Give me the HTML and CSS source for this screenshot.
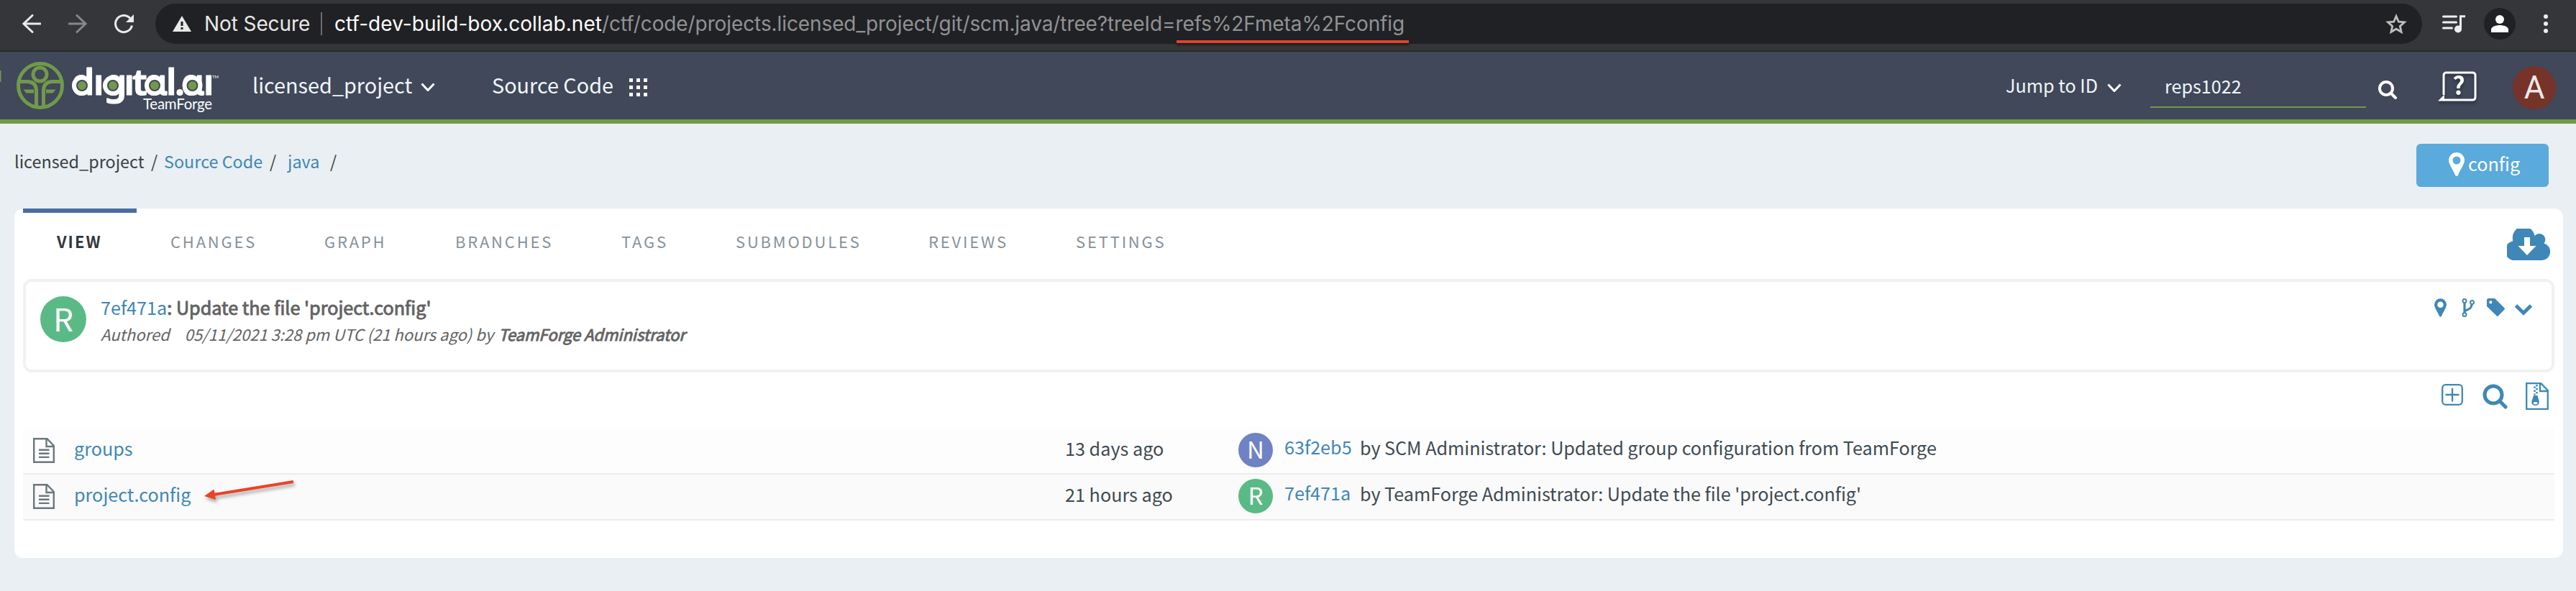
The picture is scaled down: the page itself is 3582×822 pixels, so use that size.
FILE: index.html
```html
<!DOCTYPE html>
<html lang="en">
<head>
<meta charset="utf-8">
<title>TeamForge - Source Code</title>
<link rel="stylesheet" href="styles.css">
</head>
<body>
<div class="browser">
  <svg class="nav-icon back" viewBox="0 0 26 26"><path d="M25 13H2M14 1.5L2 13l12 11.500"/></svg>
  <svg class="nav-icon forward" viewBox="0 0 26 26"><path d="M1 13h23M12 1.500L24 13 12 24.500"/></svg>
  <svg class="nav-icon reload" viewBox="0 0 28 28"><path d="M24.500 16.500A11.600 11.600 0 1 1 22 6.500"/><path class="solid" d="M27 1v11H16z"/></svg>
  <div class="omnibox">
    <svg class="warning" viewBox="0 0 26 22"><path d="M13 0l13 22H0z"/><path class="mark" d="M11.500 8h3v6h-3zM11.500 16h3v3h-3z"/></svg>
    <span class="not-secure">Not Secure</span>
    <span class="divider"></span>
    <span class="url"><span class="host">ctf-dev-build-box.collab.net</span><span class="path">/ctf/code/projects.licensed_project/git/scm.java/tree?treeId=refs%2Fmeta%2Fconfig</span></span>
    <svg class="star" viewBox="0 0 30 28"><path d="M15 3.500l3.300 7.600 8.200.8-6.200 5.500 1.800 8.100L15 21.200l-7.100 4.300 1.800-8.100-6.200-5.500 8.200-.8z"/></svg>
  </div>
  <svg class="queue" viewBox="0 0 32 25"><path d="M1.500 2h18M1.500 10h18M1.500 18h12"/><path class="stem" d="M25.500 20V1.700h6.500"/><circle cx="22" cy="19.500" r="5"/></svg>
  <div class="profile"><svg viewBox="0 0 24 24"><circle cx="12" cy="6" r="6"/><path d="M0 24v-4c0-4 7-6 12-6s12 2 12 6v4z"/></svg></div>
  <svg class="dots" viewBox="0 0 6 26"><circle cx="3" cy="3" r="3"/><circle cx="3" cy="13" r="3"/><circle cx="3" cy="23" r="3"/></svg>
  <div class="url-underline"></div>
</div>

<header class="header">
  <svg class="logo" viewBox="0 0 310 90">
    <path class="edge" d="M0 25h1.500v16H0z"/>
    <g class="emblem">
      <circle cx="56" cy="46" r="30.500"/>
      <circle cx="55.500" cy="30.500" r="9.500"/>
      <path d="M26 40.500h12q12.500 0 12.500 13V76M86 40.500H73q-12.500 0-12.500 13V76"/>
    </g>
    <path class="leaf" d="M32.500 51.500H47v5H36.500zM77.500 51.500H64v5h9.500z"/>
    <g class="bowl"><circle cx="114" cy="46" r="14"/><circle cx="157" cy="46" r="14"/><circle cx="215" cy="46" r="14"/><circle cx="267.500" cy="46" r="14"/></g>
    <text class="word" y="59" x="99.500 130 144.500 172.500 184 200.500 231 243 252 283">dıgıtɑl.ɑı</text>
    <g class="counter"><circle cx="114" cy="46" r="7"/><circle cx="157" cy="46" r="7"/><circle cx="215" cy="46" r="7"/><circle cx="267.500" cy="46" r="7"/></g>
    <text class="tm" x="295" y="36">TM</text>
    <text class="sub" x="199" y="79" textLength="96">TeamForge</text>
  </svg>
  <div class="project">licensed_project</div>
  <svg class="caret" viewBox="0 0 20 12"><path d="M1.500 1.500L10 10.500l8.500-9"/></svg>
  <div class="area">Source Code</div>
  <svg class="grid" viewBox="0 0 25 25"><path d="M0 0h5v5H0zM10 0h5v5h-5zM20 0h5v5h-5zM0 10h5v5H0zM10 10h5v5h-5zM20 10h5v5h-5zM0 20h5v5H0zM10 20h5v5h-5zM20 20h5v5h-5z"/></svg>
  <div class="jump">Jump to ID</div>
  <svg class="caret jump-caret" viewBox="0 0 20 12"><path d="M1.500 1.500L10 10.500l8.500-9"/></svg>
  <div class="field">reps1022</div>
  <svg class="find" viewBox="0 0 26 26"><circle cx="11" cy="11" r="9"/><path d="M17.500 17.500l6.500 6.500"/></svg>
  <svg class="help" viewBox="0 0 54 48"><path class="frame" d="M8 34V7q0-4 4-4h36q4 0 4 4v30q0 4-4 4H8"/><path class="tail" d="M0 42.500l9-9v9z"/><text x="29" y="34">?</text></svg>
  <div class="user">A</div>
</header>

<div class="crumb-row">
  <div class="crumbs"><span class="c1">licensed_project</span><span class="c2">/</span><a class="c3">Source Code</a><span class="c4">/</span><a class="c5">java</a><span>/</span></div>
  <div class="config-button"><svg viewBox="0 0 22 33"><path fill-rule="evenodd" d="M11 0a11 11 0 0 1 11 11c0 5-6.500 14-9 20.500q-2 3-4 0C6.500 25 0 16 0 11A11 11 0 0 1 11 0zm0 5.500a5.500 5.500 0 1 0 0 11 5.500 5.500 0 0 0 0-11z"/></svg><span>config</span></div>
</div>

<main class="panel">
  <nav class="tabs">
    <div class="tab active">VIEW</div>
    <div class="tab w-changes">CHANGES</div>
    <div class="tab w-graph">GRAPH</div>
    <div class="tab w-branches">BRANCHES</div>
    <div class="tab w-tags">TAGS</div>
    <div class="tab w-submodules">SUBMODULES</div>
    <div class="tab w-reviews">REVIEWS</div>
    <div class="tab">SETTINGS</div>
    <svg class="cloud" viewBox="0 0 60 44"><path d="M13.500 44A13.500 13.500 0 0 1 8 17.500V15A15.300 15.300 0 0 1 38.500 10 8.300 8.300 0 0 1 51.500 20.500 12 12 0 0 1 49 44z"/><path class="arrow" d="M24 12h8v12h8.500L28 37 15.500 24H24z"/></svg>
  </nav>

  <section class="commit">
    <div class="avatar big green">R</div>
    <div class="commit-text">
      <div class="title"><a>7ef471a</a><span class="faux">: Update the file 'project.config'</span></div>
      <div class="meta"><span class="authored">Authored</span><span class="when">05/11/2021 3:28 pm UTC (21 hours ago) by</span><span class="faux who">TeamForge Administrator</span></div>
    </div>
    <div class="commit-icons">
      <svg class="pin" viewBox="0 0 22 33"><path fill-rule="evenodd" d="M11 0a11 11 0 0 1 11 11c0 5-6.500 14-9 20.500q-2 3-4 0C6.500 25 0 16 0 11A11 11 0 0 1 11 0zm0 5.500a5.500 5.500 0 1 0 0 11 5.500 5.500 0 0 0 0-11z"/></svg>
      <svg class="branch" viewBox="0 0 18 26"><g><circle cx="4" cy="3.500" r="2.500"/><circle cx="4" cy="22.500" r="2.500"/><circle cx="14.500" cy="5.500" r="2.500"/></g><path d="M4 6v14M4.500 18c2-3.500 9-1 9.500-9.500"/></svg>
      <svg class="tag" viewBox="0 0 25 25"><path fill-rule="evenodd" d="M2.500 0H11l13.300 13.300q1.200 1.200 0 2.400l-8.400 8.600q-1.200 1.200-2.400 0L0 11V2.500Q0 0 2.500 0zM5.300 3.300a2.100 2.100 0 1 0 0 4.200 2.100 2.100 0 0 0 0-4.200z"/></svg>
      <svg class="down" viewBox="0 0 26 17"><path d="M2.500 3L13 13.300 23.500 3"/></svg>
    </div>
  </section>

  <div class="tools">
    <svg class="plus" viewBox="0 0 30 30"><rect x="1.200" y="1.200" width="27.600" height="27.600" rx="4.500"/><path d="M15 6v18.500M5.500 15h19"/></svg>
    <svg class="search" viewBox="0 0 35 35"><circle cx="15" cy="15" r="12"/><path d="M24 24l8 8"/></svg>
    <svg class="zip" viewBox="0 0 32 38"><path d="M1.200 1.200h20L30.800 11v25.800H1.200zM20 1.500V12h11"/><path class="teeth right" d="M15.500 3v14"/><path class="teeth left" d="M12.500 5.500v12"/><path class="pull" fill-rule="evenodd" d="M11 18h5.500l2.300 8.500c.8 7.500-11.300 7.500-10.500 0zM13.600 27c-4 0-4 3.500 0 3.500s4-3.500 0-3.500z"/></svg>
  </div>

  <div class="files">
    <div class="row first">
      <svg class="file" viewBox="0 0 30 35"><path d="M1.200 1.200h18.300L28.800 11v22.800H1.200zM18.500 1.500V12h10M8 16.700h14.500M8 21.800h14.500M8 26.900h14.500"/></svg>
      <a class="name">groups</a>
      <div class="date">13 days ago</div>
      <div class="avatar small violet">N</div>
      <a class="hash">63f2eb5</a>
      <div class="msg">by SCM Administrator: Updated group configuration from TeamForge</div>
    </div>
    <div class="row">
      <svg class="file" viewBox="0 0 30 35"><path d="M1.200 1.200h18.300L28.800 11v22.800H1.200zM18.500 1.500V12h10M8 16.700h14.500M8 21.800h14.500M8 26.900h14.500"/></svg>
      <a class="name">project.config</a>
      <div class="date">21 hours ago</div>
      <div class="avatar small green">R</div>
      <a class="hash">7ef471a</a>
      <div class="msg">by TeamForge Administrator: Update the file 'project.config'</div>
      <svg class="pointer" viewBox="0 0 132 44"><path class="line" d="M126 16L15 34"/><path class="head" d="M2 36l13.500-9.500L18 41z"/></svg>
    </div>
  </div>
</main>
</body>
</html>
```
FILE: styles.css
```css
* { box-sizing: border-box; }
body {
  margin: 0;
  height: 822px;
  overflow: hidden;
  background: #e9eff2;
  color: #3f4a51;
  font-family: "Noto Sans CJK SC", "Noto Sans CJK JP", sans-serif;
  font-size: 25.2px;
  white-space: nowrap;
}
svg { display: block; flex: none; fill: none; }
a { color: #3f87b7; text-decoration: none; }

/* Browser toolbar */
.browser {
  position: relative;
  display: flex;
  align-items: center;
  height: 72px;
  padding: 0 39px 4px 31px;
  background: #35363a;
  border-bottom: 2px solid #282a2a;
}
.nav-icon { width: 26px; height: 26px; stroke: #e9eaed; stroke-width: 3px; stroke-linecap: round; }
.forward { margin-left: 38px; stroke: #86878a; }
.reload { width: 28px; height: 28px; margin-left: 38px; stroke-linecap: butt; }
.solid { fill: #e9eaed; stroke: none; }
.omnibox {
  display: flex;
  align-items: center;
  width: 3152px;
  height: 56px;
  margin-left: 29px;
  padding: 0 21px 0 24px;
  border-radius: 28px;
  background: #202124;
  color: #e8e8e8;
  font-family: Inter, sans-serif;
  font-size: 28px;
}
.warning { width: 26px; height: 22px; fill: #e8e8e8; }
.mark { fill: #202124; }
.not-secure { width: 163px; padding-left: 18px; letter-spacing: -.1px; }
.divider { width: 2px; height: 32px; margin-left: 17px; background: #6b6c6f; }
.url { flex: 1; padding-left: 17px; color: #919294; }
.host { color: #fff; letter-spacing: .05px; }
.path { letter-spacing: -.1px; }
.star { width: 30px; height: 28px; stroke: #bdbdbd; stroke-width: 2.800px; }
.queue { width: 32px; height: 25px; margin-left: 28px; stroke: #eceef0; stroke-width: 3px; stroke-linecap: round; }
.queue .stem { stroke-linecap: butt; }
.queue circle { fill: #eceef0; stroke: none; }
.profile { display: grid; place-items: center; width: 44px; height: 44px; margin-left: 26px; border-radius: 50%; background: #202124; }
.profile svg { width: 24px; height: 24px; fill: #fff; }
.dots { width: 6px; height: 26px; margin-left: 39px; fill: #eceef0; }
.url-underline { position: absolute; left: 1636px; top: 56px; width: 323px; height: 4px; background: #e6412a; box-shadow: 0 3px 3px rgba(0, 0, 0, .4); }

/* Application header */
.header {
  display: flex;
  align-items: center;
  height: 100px;
  padding: 0 28px 2px 0;
  background: #40485a;
  border-bottom: 6px solid #72994a;
  color: #f1f6f9;
  font-size: 28.800px;
  line-height: 40px;
}
.logo { width: 310px; height: 90px; }
.edge, .leaf { fill: #72994a; }
.emblem { stroke: #72994a; stroke-width: 5px; }
.bowl { fill: #fff; }
.counter { fill: #72994a; stroke: #40485a; stroke-width: 2px; }
.word { fill: #fff; stroke: #fff; stroke-width: 1.200px; stroke-linejoin: round; font: 600 51px "Noto Sans", sans-serif; }
.tm { fill: #fff; font: 6px Lato, sans-serif; }
.sub { fill: #fff; font: 20.500px Lato, sans-serif; }
.project { width: 234px; margin-left: 41px; }
.caret { width: 20px; height: 12px; margin-top: 5px; stroke: #fff; stroke-width: 3px; }
.area { width: 191px; margin-left: 79px; }
.grid { width: 25px; height: 25px; margin-top: 6px; fill: #fff; }
.jump { width: 141px; margin-left: auto; font-size: 25.200px; }
.jump-caret { margin-top: 8px; }
.field { width: 300px; height: 94px; margin: 2px 0 0 40px; padding: 27px 0 0 20px; font-size: 25.200px; background: linear-gradient(#72994a, #72994a) 0 76px / 300px 2px no-repeat; }
.find { width: 26px; height: 26px; margin: 14px 0 0 17px; stroke: #fff; stroke-width: 4px; stroke-linecap: round; }
.help { width: 54px; height: 48px; margin: 8px 0 0 57px; overflow: visible; filter: drop-shadow(0 3px 2px rgba(0, 0, 0, .35)); }
.frame { stroke: #fff; stroke-width: 3px; }
.tail { fill: #fff; }
.help text { fill: #fff; font: 700 34px "Noto Sans CJK SC", sans-serif; text-anchor: middle; }
.user { width: 60px; height: 60px; margin: 8px 0 0 50px; border-radius: 50%; background: #76332a; text-align: center; font: 44px/60px Roboto, sans-serif; color: #f0e8e8; }

/* Breadcrumbs */
.crumb-row { display: flex; justify-content: space-between; height: 118px; padding: 28px 38px 0 20px; }
.crumbs { display: flex; font-size: 23.400px; line-height: 48px; color: #3a3f44; }
.c1 { width: 190px; }
.c2 { width: 18px; }
.c3 { width: 147px; }
.c4 { width: 25px; }
.c5 { width: 59px; }
.config-button { display: flex; width: 184px; height: 60px; padding: 0 0 0 45px; border-radius: 6px; background: #5aaadb; color: #fff; line-height: 54px; }
.config-button svg { width: 22px; height: 33px; margin: 12px 5px 0 0; fill: #fff; }

/* Panel */
.panel { width: 3544px; height: 486px; margin-left: 20px; padding: 0 12px; border-radius: 12px; background: #fff; }
.tabs { display: flex; height: 98px; font-size: 22px; line-height: 90px; letter-spacing: 2.800px; color: #87929a; }
.tab { padding-left: 47px; }
.active { width: 158px; color: #33373a; font-weight: 700; letter-spacing: 2px; box-shadow: inset 0 6px #4a6da0; }
.w-changes { width: 214px; }
.w-graph { width: 182px; }
.w-branches { width: 231px; }
.w-tags { width: 159px; }
.w-submodules { width: 268px; }
.w-reviews { width: 205px; }
.cloud { width: 60px; height: 44px; margin: 28px 6px 0 auto; fill: #3f87b7; }
.cloud .arrow { fill: #fff; }

.commit { display: flex; height: 130px; padding: 17px 26px 0 20px; border: 4px solid #eff1f3; border-radius: 12px; }
.avatar { border-radius: 50%; color: #fff; text-align: center; }
.big { width: 64px; height: 64px; margin-top: 3px; font-size: 44px; line-height: 60px; }
.small { width: 48px; height: 48px; margin: 6px 0 0; font-size: 33px; line-height: 45px; }
.green { background: #5aba85; }
.violet { background: #6f82c4; }
.commit-text { flex: 1; margin-left: 20px; line-height: 37px; color: #636363; }
.faux { -webkit-text-stroke: .9px currentColor; }
.meta { font-size: 22px; font-style: italic; }
.when { margin-left: 21px; }
.who { margin-left: 7px; }
.commit-icons { display: flex; height: 37px; align-items: center; }
.pin { width: 17px; height: 26px; fill: #3f87b7; }
.branch { width: 18px; height: 26px; margin-left: 21px; stroke: #3f87b7; stroke-width: 2px; }
.branch > path { stroke-width: 3.200px; }
.tag { width: 25px; height: 25px; margin-left: 17px; fill: #3f87b7; }
.down { width: 26px; height: 17px; margin: 5px 0 0 13px; stroke: #3f87b7; stroke-width: 5px; }

.tools { display: flex; justify-content: flex-end; height: 76px; padding: 14px 8px 0 0; }
.tools svg { stroke: #3f87b7; stroke-width: 2.300px; }
.plus { width: 30px; height: 30px; margin-top: 2px; }
.tools .search { width: 35px; height: 35px; margin: 2px 0 0 27px; stroke-width: 5px; stroke-linecap: round; }
.zip { width: 32px; height: 38px; margin-left: 25px; }
.zip .teeth { stroke-width: 2.500px; stroke-dasharray: 2.500 2.500; }
.zip .pull { fill: #3f87b7; stroke: none; }

/* File list */
.row { position: relative; display: flex; height: 64px; padding-left: 14px; border-bottom: 2px solid #ececec; background: #fafafa; line-height: 54px; }
.first { height: 66px; padding-top: 2px; background: #fdfdfd; }
.file { width: 30px; height: 35px; margin-top: 13px; stroke: #6d777c; stroke-width: 2.400px; }
.name { width: 1378px; padding-left: 27px; }
.date { width: 268px; padding-left: 27px; }
.hash { width: 107px; padding-left: 16px; line-height: 51px; }
.msg { padding-left: 14px; line-height: 52px; letter-spacing: -.04px; }
.pointer { position: absolute; left: 250px; top: -6px; width: 132px; height: 44px; filter: drop-shadow(2px 4px 2px rgba(0, 0, 0, .3)); }
.line { stroke: #ea4325; stroke-width: 4px; }
.head { fill: #ea4325; }
```
